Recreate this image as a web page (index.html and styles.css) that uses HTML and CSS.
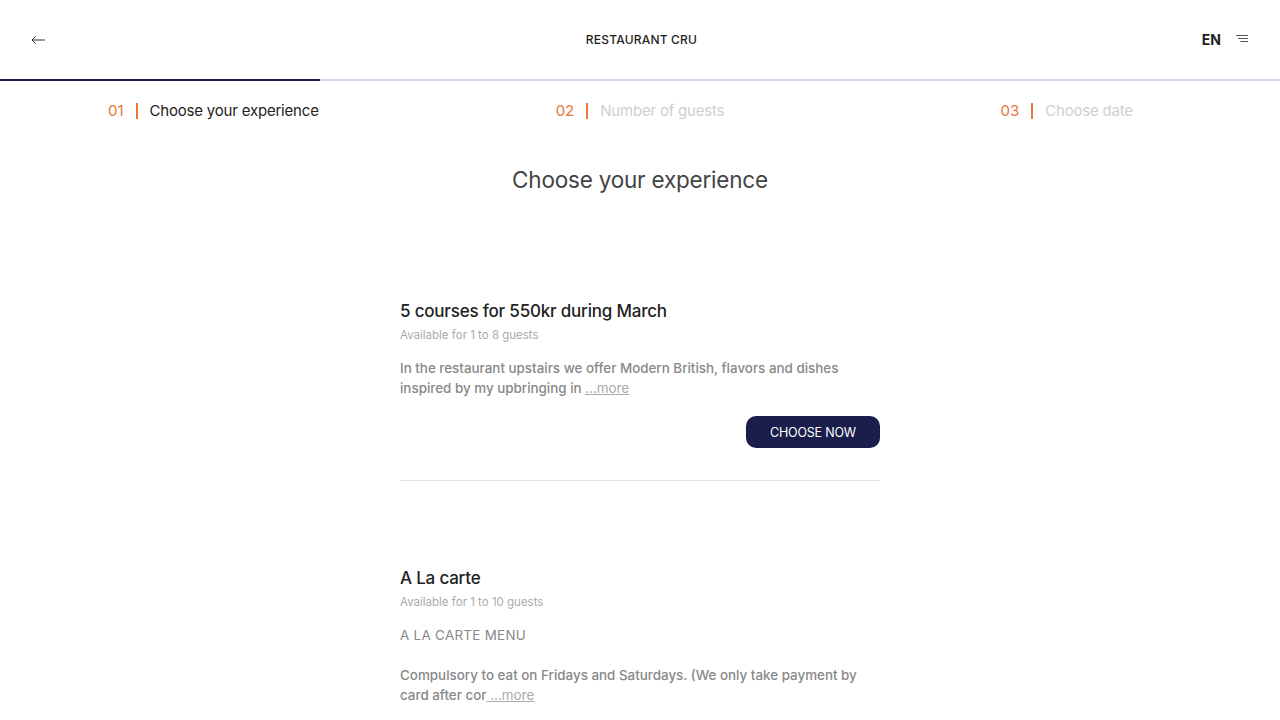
FILE: index.html
```html
<!DOCTYPE html>
<html lang="en">
<head>
<meta charset="utf-8">
<title>Restaurant CRU</title>
<link rel="stylesheet" href="styles.css">
</head>
<body>
<header class="topbar">
  <div class="topbar-left">
    <svg class="back" width="16" height="10" viewBox="0 0 16 10"><path d="M15 5H2M5.5 1.5L2 5l3.5 3.5" fill="none" stroke="#333" stroke-width="1"/></svg>
  </div>
  <div class="brand">RESTAURANT CRU</div>
  <div class="topbar-right">
    <span class="lang">EN</span>
    <svg class="menu" width="14" height="10" viewBox="0 0 14 10"><path d="M1 1.5h12M3 4.5h10M5.5 7.5h7.5" fill="none" stroke="#555" stroke-width="1"/></svg>
  </div>
</header>
<div class="progress"><div class="progress-fill" style="width:25%"></div></div>
<nav class="steps">
  <div class="step active"><span class="num">01</span><span class="sep"></span><span class="label">Choose your experience</span></div>
  <div class="step"><span class="num">02</span><span class="sep"></span><span class="label">Number of guests</span></div>
  <div class="step"><span class="num">03</span><span class="sep"></span><span class="label">Choose date</span></div>
</nav>
<main class="content">
  <h1 class="heading">Choose your experience</h1>
  <section class="card">
    <h2 class="card-title">5 courses for 550kr during March</h2>
    <p class="avail">Available for 1 to 8 guests</p>
    <p class="desc">In the restaurant upstairs we offer Modern British, flavors and dishes inspired by my upbringing in <a class="more" href="#">...more</a></p>
    <div class="actions"><button class="btn">CHOOSE NOW</button></div>
  </section>
  <section class="card">
    <h2 class="card-title">A La carte</h2>
    <p class="avail">Available for 1 to 10 guests</p>
    <p class="desc upper">A LA CARTE MENU</p>
    <p class="desc gap">Compulsory to eat on Fridays and Saturdays. (We only take payment by card after cor<a class="more" href="#"> ...more</a></p>
  </section>
</main>
</body>
</html>
```
FILE: styles.css
```css
* { box-sizing: border-box; }
html, body { margin: 0; padding: 0; background: #fff; }
body { font-family: Inter, "Noto Sans", sans-serif; color: #222; }

.topbar {
  height: 79px;
  display: grid;
  grid-template-columns: 1fr auto 1fr;
  align-items: center;
  padding: 0 31px 0 30px;
}
.topbar-left { display: flex; align-items: center; }
.back { display: block; margin-top: 1px; }
.brand { font-size: 12px; letter-spacing: 0.2px; color: #1e1e1e; font-weight: 500; margin-left: 4px; }
.topbar-right { display: flex; justify-content: flex-end; align-items: center; gap: 14px; }
.lang { font-size: 14px; font-weight: 700; color: #1e1e1e; }
.menu { display: block; margin-top: -2px; }

.progress { height: 2px; background: #d6d6ea; }
.progress-fill { height: 100%; background: #1b1d4a; }

.steps {
  display: grid;
  grid-template-columns: repeat(3, 1fr);
  height: 59px;
  align-items: center;
}
.step { display: flex; justify-content: center; align-items: center; font-size: 15px; }
.step .num { color: #e8773a; font-size: 15px; }
.step .sep { width: 2px; height: 16px; background: #e8773a; margin: 0 12px; }
.step .label { color: #cfcfcf; letter-spacing: -0.2px; }
.step.active .label { color: #222; }

.content { width: 480px; margin: 0 auto; }
.heading {
  text-align: center;
  font-weight: 400;
  font-size: 22.5px;
  color: #444;
  margin: 26px 0 0;
  letter-spacing: -0.2px;
}
.card { padding-top: 108px; }
.card + .card { border-top: 1px solid #e0e0ea; padding-top: 87px; }
.card:first-of-type { padding-bottom: 32px; }
.card-title { font-size: 17px; font-weight: 500; margin: 0; color: #222; letter-spacing: -0.2px; }
.avail { font-size: 11.5px; color: #aaa; margin: 7px 0 0; }
.desc { font-size: 13.4px; color: #888; font-weight: 500; line-height: 20px; margin: 16px 0 0; }
.desc.upper { margin-top: 16px; letter-spacing: 0.3px; font-weight: 400; }
.desc.gap { margin-top: 20px; }
.more { color: #aaa; text-decoration: underline; font-weight: 400; }
.actions { display: flex; justify-content: flex-end; margin-top: 18px; }
.btn {
  width: 134px;
  height: 32px;
  border: none;
  border-radius: 10px;
  background: #1b1d4a;
  color: #fff;
  font-family: inherit;
  font-size: 12.5px;
  letter-spacing: -0.2px;
}
```
